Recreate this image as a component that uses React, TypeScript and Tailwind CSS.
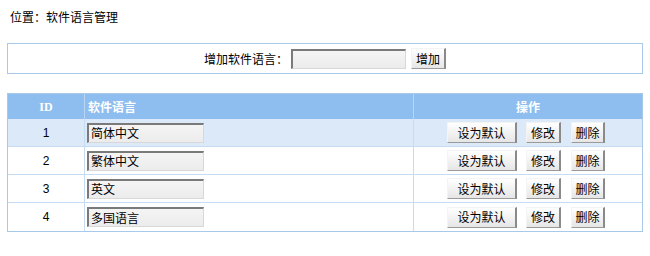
import React from "react";

const font = { fontFamily: '"Noto Sans CJK SC", "Liberation Sans", sans-serif' };

function Btn({ children, w }: { children: React.ReactNode; w: string }) {
  return (
    <button
      className={`h-[21px] ${w} text-[12px] leading-none text-black bg-gradient-to-b from-white to-[#e6e6e6] border border-t-[#f4f4f4] border-l-[#f4f4f4] border-r-[#8a8a8a] border-b-[#9a9a9a] border-r-2`}
      style={font}
    >
      {children}
    </button>
  );
}

function Inp({ value, w }: { value?: string; w: string }) {
  return (
    <div
      className={`h-[20px] ${w} flex items-center pl-[2px] text-[12px] text-black bg-gradient-to-b from-[#f4f4f4] to-[#ececec] border border-t-[#7a7a7a] border-l-[#7a7a7a] border-r-[#d8d8d8] border-b-[#d8d8d8] border-t-2 border-l-2`}
    >
      {value}
    </div>
  );
}

const rows = [
  { id: 1, name: "简体中文" },
  { id: 2, name: "繁体中文" },
  { id: 3, name: "英文" },
  { id: 4, name: "多国语言" },
];

export default function App() {
  return (
    <div className="w-[650px] h-[256px] bg-white text-black text-[12px]" style={font}>
      <div className="pl-[10px] pt-[8px] h-[43px] leading-[18px]">位置：软件语言管理</div>
      <div className="mx-[7px] h-[31px] border border-[#a9c9ea] flex items-center justify-center">
        <span className="mr-[3px]">增加软件语言：</span>
        <Inp w="w-[115px]" />
        <div className="w-[5px]" />
        <Btn w="w-[35px]">增加</Btn>
      </div>
      <div className="mx-[7px] mt-[19px] border border-[#a9c9ea]">
        <div className="flex h-[25px] bg-[#8ebdef] text-white font-bold items-center">
          <div className="w-[77px] text-center border-r border-[#b9d5f3] h-full flex items-center justify-center" style={{ fontFamily: '"Liberation Serif", serif' }}>ID</div>
          <div className="w-[329px] pl-[3px] border-r border-[#b9d5f3] h-full flex items-center">软件语言</div>
          <div className="flex-1 text-center">操作</div>
        </div>
        {rows.map((r, i) => (
          <div
            key={r.id}
            className={`flex h-[28px] items-center ${i === 0 ? "bg-[#dce9f8]" : "bg-white"} ${i < 3 ? "border-b border-[#c6dcf3]" : ""}`}
          >
            <div className="w-[77px] h-full flex items-center justify-center border-r border-[#c6dcf3]" style={{ fontFamily: '"Liberation Sans", sans-serif' }}>{r.id}</div>
            <div className="w-[329px] h-full flex items-center pl-[2px] border-r border-[#c6dcf3]">
              <Inp value={r.name} w="w-[117px]" />
            </div>
            <div className="flex-1 flex items-center pl-[33px]">
              <Btn w="w-[70px]">设为默认</Btn>
              <div className="w-[9px]" />
              <Btn w="w-[35px]">修改</Btn>
              <div className="w-[10px]" />
              <Btn w="w-[34px]">删除</Btn>
            </div>
          </div>
        ))}
      </div>
    </div>
  );
}
